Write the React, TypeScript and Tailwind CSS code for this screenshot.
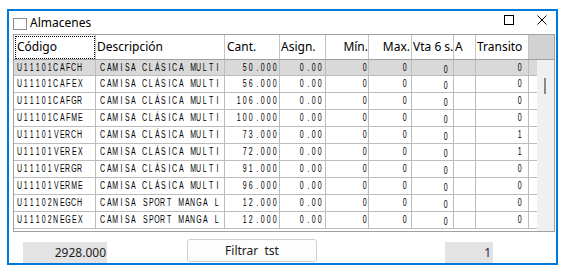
import React from "react";

type Col = {
  label: string;
  w: string;
  head: string;
  cell: string;
};

const cols: Col[] = [
  { label: "Código", w: "w-[82px]", head: "justify-start pl-[1px]", cell: "justify-start pl-[3px]" },
  { label: "Descripción", w: "w-[129px]", head: "justify-start pl-[1px]", cell: "justify-start pl-[4px]" },
  { label: "Cant.", w: "w-[55px]", head: "justify-start pl-[2px]", cell: "justify-end pr-[1px]" },
  { label: "Asign.", w: "w-[46px]", head: "justify-start pl-[1px]", cell: "justify-end pr-[2px]" },
  { label: "Mín.", w: "w-[43px]", head: "justify-end pr-[0px]", cell: "justify-end pr-[0px]" },
  { label: "Max.", w: "w-[43px]", head: "justify-end pr-[1px]", cell: "justify-end pr-[3px]" },
  { label: "Vta 6 s.", w: "w-[42px]", head: "justify-start pl-[1px]", cell: "justify-end pr-[4px] pt-[4px]" },
  { label: "A", w: "w-[22px]", head: "justify-start pl-[1px]", cell: "justify-end pr-[4px]" },
  { label: "Transito", w: "w-[53px]", head: "justify-start pl-[1px]", cell: "justify-end pr-[5px]" },
];

const rows: string[][] = [
  ["U11101CAFCH", "CAMISA CLÁSICA MULTI", "50.000", "0.00", "0", "0", "0", "", "0"],
  ["U11101CAFEX", "CAMISA CLÁSICA MULTI", "56.000", "0.00", "0", "0", "0", "", "0"],
  ["U11101CAFGR", "CAMISA CLÁSICA MULTI", "106.000", "0.00", "0", "0", "0", "", "0"],
  ["U11101CAFME", "CAMISA CLÁSICA MULTI", "100.000", "0.00", "0", "0", "0", "", "0"],
  ["U11101VERCH", "CAMISA CLÁSICA MULTI", "73.000", "0.00", "0", "0", "0", "", "1"],
  ["U11101VEREX", "CAMISA CLÁSICA MULTI", "72.000", "0.00", "0", "0", "0", "", "1"],
  ["U11101VERGR", "CAMISA CLÁSICA MULTI", "91.000", "0.00", "0", "0", "0", "", "0"],
  ["U11101VERME", "CAMISA CLÁSICA MULTI", "96.000", "0.00", "0", "0", "0", "", "0"],
  ["U11102NEGCH", "CAMISA SPORT MANGA L", "12.000", "0.00", "0", "0", "0", "", "0"],
  ["U11102NEGEX", "CAMISA SPORT MANGA L", "12.000", "0.00", "0", "0", "0", "", "0"],
];

function Mono({ text }: { text: string }) {
  return (
    <span className="inline-flex" aria-label={text}>
      {Array.from(text).map((ch, i) => (
        <span key={i} className="inline-flex w-[6px] justify-center">
          <span className="inline-block scale-x-[0.7]">{ch === " " ? "\u00a0" : ch}</span>
        </span>
      ))}
    </span>
  );
}

export default function App() {
  return (
    <div className="w-[567px] h-[272px] bg-white overflow-hidden pl-[7px] pt-[9px]">
      <div className="w-[551px] h-[256px] border-2 border-[#0078d7] bg-white flex flex-col font-['Noto_Sans',sans-serif] text-black">
        {/* Title bar */}
        <div className="h-[23px] flex items-start pl-[4px] pr-[9px] shrink-0">
          <div className="mt-[7px] w-[14px] h-[12px] border border-[#8c8c8c] bg-white shrink-0" />
          <div className="ml-[3px] mt-[4px] text-[12px] leading-[16px]">Almacenes</div>
          <div className="ml-auto mt-[4px] w-[10px] h-[10px] border border-black" />
          <svg className="ml-[23px] mt-[4px]" width="10" height="10" viewBox="0 0 10 10">
            <path d="M0.5 0.5 L9.5 9.5 M9.5 0.5 L0.5 9.5" stroke="#000" strokeWidth="1" fill="none" />
          </svg>
        </div>

        {/* Grid */}
        <div className="ml-[4px] mr-[1px] h-[198px] border border-[#a0a0a0] flex flex-col shrink-0">
          {/* Header */}
          <div className="h-[25px] flex border-b border-[#a0a0a0] shrink-0 text-[12px]">
            {cols.map((c, i) => (
              <div
                key={c.label}
                className={`${c.w} shrink-0 h-full border-r border-[#c4c4c4] bg-white flex items-center whitespace-nowrap overflow-hidden ${i === 0 ? "" : c.head}`}
              >
                {i === 0 ? (
                  <div className="ml-[1px] w-[80px] h-[23px] border border-dotted border-black flex items-center pl-[1px]">
                    {c.label}
                  </div>
                ) : (
                  c.label
                )}
              </div>
            ))}
            <div className="flex-1 h-full bg-[#d2d2d2]" />
          </div>

          {/* Body */}
          <div className="flex-1 flex">
            <div className="w-[523px] flex flex-col">
              {rows.map((r, ri) => (
                <div
                  key={ri}
                  className={`flex border-b border-[#bcbcbc] ${ri === 0 ? "h-[16px] bg-[#d9d9d9]" : "h-[17px] bg-white"} font-['Liberation_Sans',sans-serif] text-[10px]`}
                >
                  {cols.map((c, ci) => (
                    <div
                      key={ci}
                      className={`${c.w} shrink-0 h-full border-r border-[#bcbcbc] flex items-center whitespace-nowrap overflow-hidden leading-none ${c.cell}`}
                    >
                      <Mono text={r[ci]} />
                    </div>
                  ))}
                  <div className="flex-1" />
                </div>
              ))}
            </div>
            <div className="flex-1 bg-[#f0f0f0] pt-[18px] pl-[7px]">
              <div className="w-[2px] h-[16px] bg-[#8a8a8a]" />
            </div>
          </div>
        </div>

        {/* Bottom */}
        <div className="flex-1 flex items-end text-[12px]">
          <div className="ml-[14px] w-[84px] h-[21px] bg-[#e3e3e3] flex items-center justify-end pr-[1px] text-[#1e1e1e]">
            2928.000
          </div>
          <button className="ml-[80px] mb-[1px] w-[130px] h-[23px] border border-[#cfcfcf] rounded-[3px] bg-[#fdfdfd] flex items-center justify-center text-[#1a1a1a]">
            Filtrar&nbsp;&nbsp;tst
          </button>
          <div className="ml-[128px] w-[48px] h-[21px] bg-[#e3e3e3] flex items-center justify-end pr-[2px] text-[#2a1a4a]">
            1
          </div>
        </div>
      </div>
    </div>
  );
}
